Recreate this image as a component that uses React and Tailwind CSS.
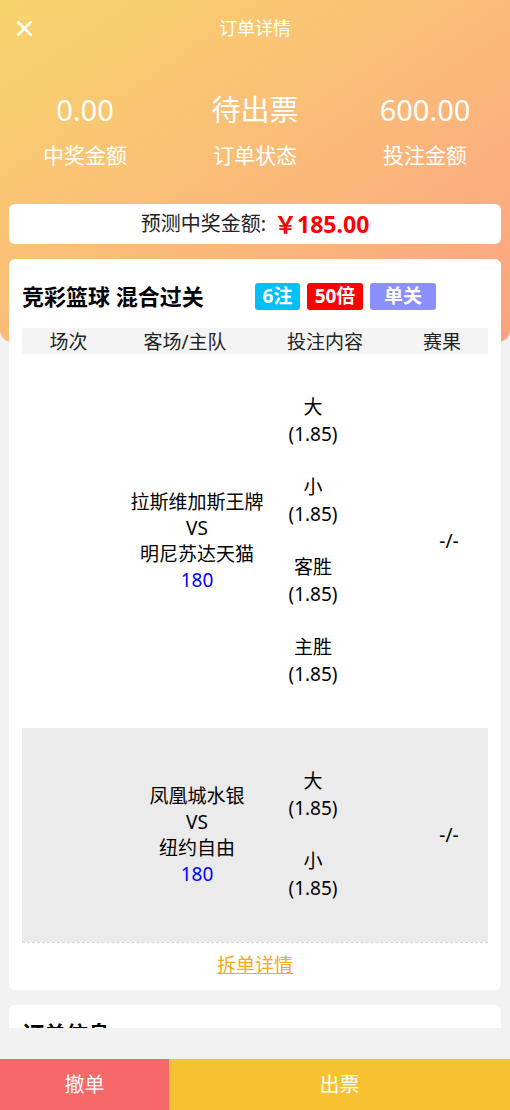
import { X } from 'lucide-react';

const bets1 = ['大', '小', '客胜', '主胜'];
const bets2 = ['大', '小'];

const MatchRow = ({ away, home, line, bets, gray }) => (
  <div className={`flex items-center py-[27px] ${gray ? 'bg-[#ebebeb]' : 'bg-white'}`}>
    <div className="w-[100px]" />
    <div className="flex w-[150px] flex-col items-center text-[19px] leading-[26px] text-black">
      <span className="whitespace-nowrap">{away}</span>
      <span>VS</span>
      <span className="whitespace-nowrap">{home}</span>
      <span className="text-[#0000ff]">{line}</span>
    </div>
    <div className="flex w-[82px] flex-col items-center">
      {bets.map((b, i) => (
        <div key={i} className="flex flex-col items-center py-[13px] text-[19px] leading-[27px] text-black">
          <span>{b}</span>
          <span>(1.85)</span>
        </div>
      ))}
    </div>
    <div className="flex-1" />
    <div className="w-[78px] text-center text-[19px] text-black">-/-</div>
  </div>
);

export default function App() {
  return (
    <div
      className="relative flex h-[1110px] w-[510px] flex-col overflow-hidden bg-[#f2f2f2]"
      style={{ fontFamily: '"Noto Sans", "Noto Sans CJK SC", sans-serif' }}
    >
      {/* 头部背景 */}
      <div className="absolute left-0 top-0 h-[342px] w-full rounded-b-[12px] bg-gradient-to-br from-[#f7d46b] to-[#fca282]" />

      <div className="relative h-[1028px] overflow-hidden">
        {/* 导航 */}
        <div className="relative flex h-[56px] items-center justify-center">
          <X className="absolute left-[12px] top-[16px] text-white" size={25} strokeWidth={2.4} />
          <p className="text-[18px] text-white">订单详情</p>
        </div>

        {/* 统计 */}
        <div className="mt-[34px] grid grid-cols-3 text-white">
          {[
            ['0.00', '中奖金额'],
            ['待出票', '订单状态'],
            ['600.00', '投注金额'],
          ].map(([v, l]) => (
            <div key={l} className="flex flex-col items-center">
              <span className="text-[29px] leading-[40px]">{v}</span>
              <span className="mt-[11px] text-[21px] leading-[28px]">{l}</span>
            </div>
          ))}
        </div>

        {/* 预测 */}
        <div className="mx-[9px] mt-[35px] flex h-[40px] items-center justify-center rounded-[6px] bg-white">
          <span className="text-[20px] text-[#222]">预测中奖金额:</span>
          <span className="ml-[8px] text-[23px] font-bold text-[#ff0000]">￥185.00</span>
        </div>

        {/* 方案 */}
        <div className="mx-[9px] mt-[15px] rounded-[6px] bg-white px-[13px] pt-[24px] pb-[12px]">
          <div className="flex h-[27px] items-center">
            <p className="text-[22px] font-bold text-black">竞彩篮球 混合过关</p>
            <div className="ml-auto mr-[52px] flex gap-[7px]">
              <span className="flex h-[27px] w-[45px] items-center justify-center rounded-[3px] bg-[#00c0fa] text-[19px] font-bold text-white">6注</span>
              <span className="flex h-[27px] w-[56px] items-center justify-center rounded-[3px] bg-[#ff0000] text-[19px] font-bold text-white">50倍</span>
              <span className="flex h-[27px] w-[66px] items-center justify-center rounded-[3px] bg-[#8b8fff] text-[19px] font-bold text-white">单关</span>
            </div>
          </div>

          <div className="mt-[18px]">
            <div className="grid h-[26px] grid-cols-[93px_140px_140px_94px] items-center bg-[#f4f4f4] text-center text-[19px] text-[#222]">
              <span>场次</span>
              <span>客场/主队</span>
              <span>投注内容</span>
              <span>赛果</span>
            </div>
            <MatchRow away="拉斯维加斯王牌" home="明尼苏达天猫" line="180" bets={bets1} />
            <MatchRow away="凤凰城水银" home="纽约自由" line="180" bets={bets2} gray />
            <div className="border-b border-dashed border-[#d6d6d6]" />
          </div>

          <div className="mt-[10px] text-center">
            <span className="text-[19px] leading-[24px] text-[#f7a81b] underline">拆单详情</span>
          </div>
        </div>

        <div className="mx-[9px] mt-[15px] rounded-[6px] bg-white px-[13px] pt-[12px] pb-[20px]">
          <p className="text-[22px] font-bold text-black">订单信息</p>
        </div>
      </div>

      <div className="mt-auto flex h-[51px] text-[20px] text-white">
        <div className="flex w-[169px] items-center justify-center bg-[#f76868]">撤单</div>
        <div className="flex flex-1 items-center justify-center bg-[#f7c231]">出票</div>
      </div>
    </div>
  );
}
